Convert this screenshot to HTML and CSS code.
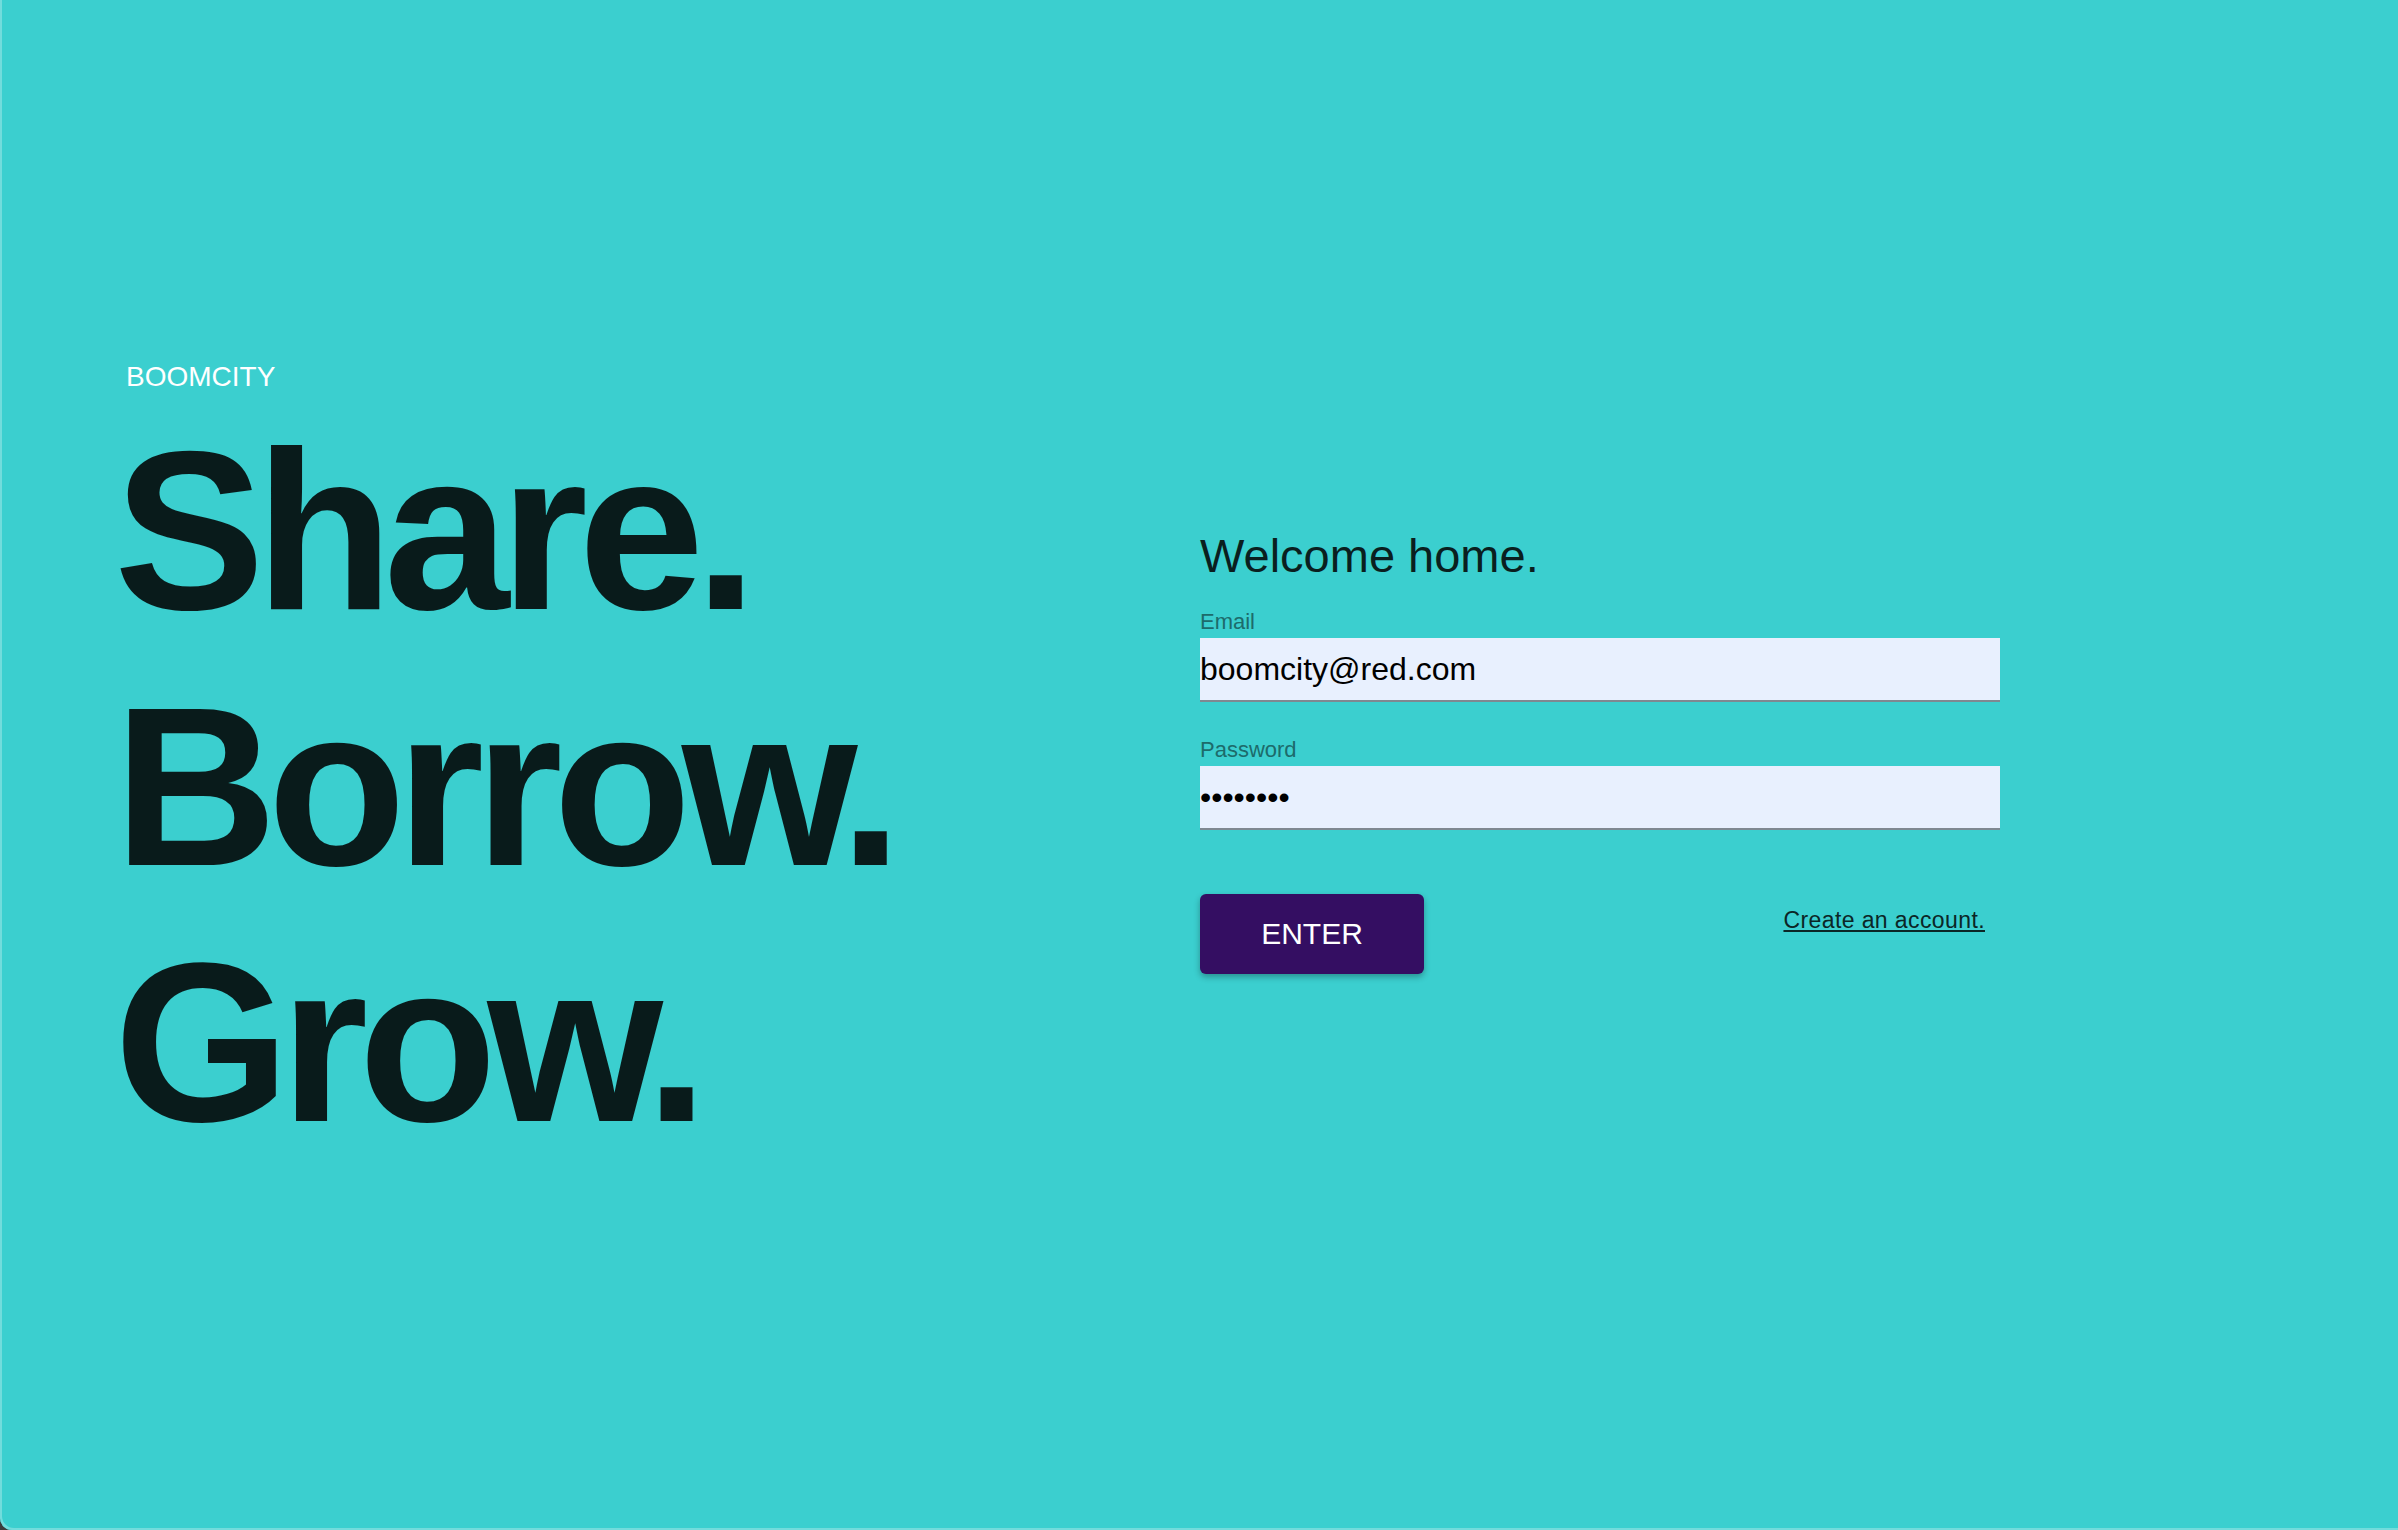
FILE: index.html
```html
<!DOCTYPE html>
<html lang="en">
<head>
<meta charset="utf-8">
<title>BoomCity</title>
<link rel="stylesheet" href="styles.css">
</head>
<body>
<main class="stage">
  <section class="intro">
    <p class="brand">BOOMCITY</p>
    <h1 class="motto">
      <span class="motto-line">Share.</span>
      <span class="motto-line">Borrow.</span>
      <span class="motto-line">Grow.</span>
    </h1>
  </section>
  <section class="login">
    <h2 class="login-title">Welcome home.</h2>
    <form class="login-form">
      <label class="field">
        <span class="field-label">Email</span>
        <input class="field-input" type="email" value="boomcity@red.com">
      </label>
      <label class="field">
        <span class="field-label">Password</span>
        <input class="field-input" type="password" value="12345678">
      </label>
      <div class="actions">
        <button class="enter-btn" type="button">ENTER</button>
        <a class="signup-link" href="#">Create an account.</a>
      </div>
    </form>
  </section>
</main>
</body>
</html>
```
FILE: styles.css
```css
html {
  background: #3c3c3c;
}

body {
  margin: 0;
  width: 2398px;
  height: 1530px;
  overflow: hidden;
  background: #3bcfcf;
  border-bottom-left-radius: 12px;
  box-shadow: inset 2px -2px 0 #72dcdc;
  font-family: "Liberation Sans", Arial, sans-serif;
}

.stage {
  height: 1530px;
  display: grid;
  grid-template-columns: 1200px 800px;
  align-items: start;
}

.intro {
  padding: 361px 0 0 126px;
}

.brand {
  margin: 0;
  font-size: 28px;
  line-height: 32px;
  color: #ffffff;
}

.motto {
  margin: 10px 0 0 -12px;
  font-size: 226px;
  line-height: 256px;
  font-weight: 700;
  letter-spacing: -9.5px;
  color: #091b1b;
}

.motto-line {
  display: block;
}

.login {
  padding-top: 529px;
}

.login-title {
  margin: 0 0 26px;
  font-size: 47px;
  line-height: 54px;
  font-weight: 400;
  color: #0a1f1f;
}

.login-form {
  display: flex;
  flex-direction: column;
}

.field {
  display: flex;
  flex-direction: column;
}

.field + .field {
  margin-top: 35px;
}

.field-label {
  margin-bottom: 3px;
  font-size: 22px;
  line-height: 26px;
  color: #1d6b6b;
}

.field-input {
  width: 800px;
  height: 62px;
  box-sizing: content-box;
  padding: 0;
  border: 0;
  border-bottom: 2px solid #7f8891;
  background: #e8f0fe;
  font-family: "Liberation Sans", Arial, sans-serif;
  font-size: 32px;
  color: #000000;
  outline: none;
}

.actions {
  display: flex;
  justify-content: space-between;
  align-items: flex-start;
  margin-top: 64px;
}

.enter-btn {
  width: 224px;
  height: 80px;
  padding: 0;
  border: 0;
  border-radius: 6px;
  background: #340e62;
  color: #ffffff;
  font-family: "Liberation Sans", Arial, sans-serif;
  font-size: 30px;
  box-shadow: 0 3px 6px rgba(0, 0, 0, 0.3);
}

.signup-link {
  margin: 13px 15px 0 0;
  font-size: 23px;
  line-height: 26px;
  letter-spacing: 0.4px;
  color: #0b2626;
  text-decoration: underline;
}
```
